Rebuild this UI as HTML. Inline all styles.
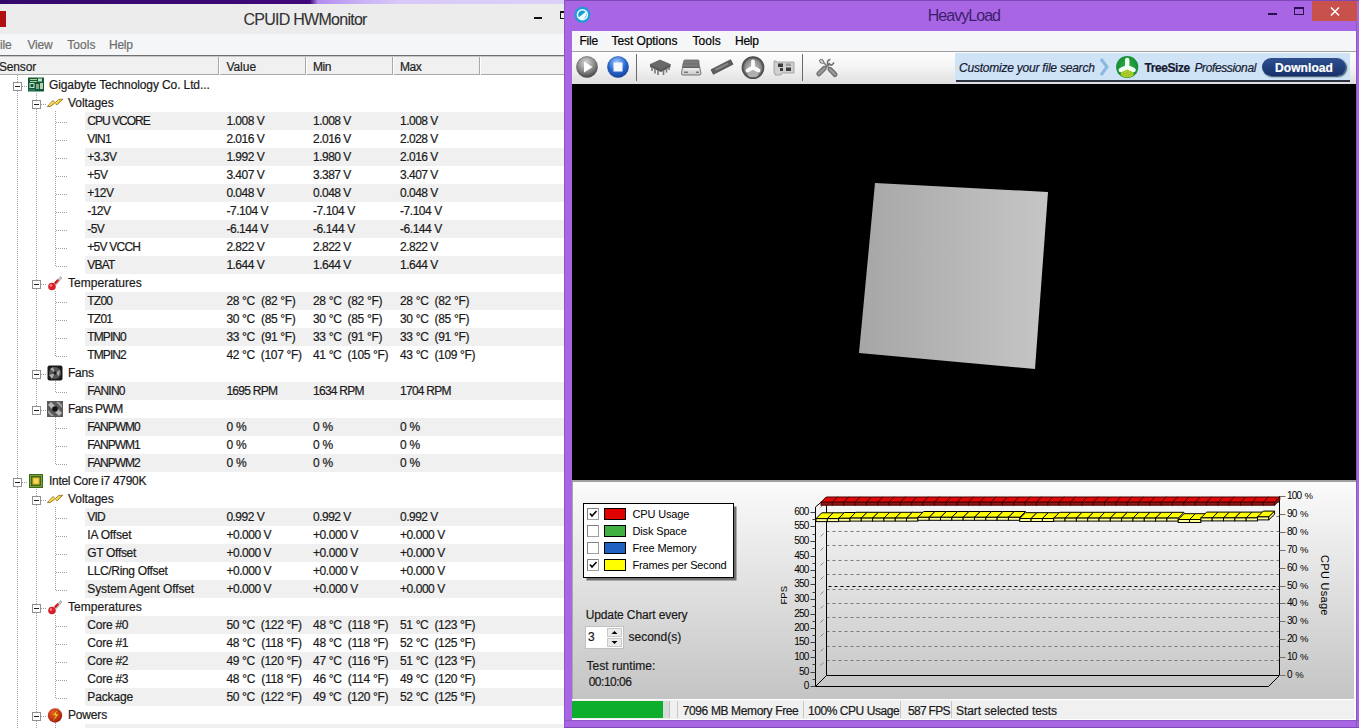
<!DOCTYPE html><html><head><meta charset="utf-8"><style>
*{margin:0;padding:0;box-sizing:border-box}
html,body{width:1359px;height:728px;overflow:hidden;background:#fff;font-family:"Liberation Sans",sans-serif}
.a{position:absolute}
.t{position:absolute;white-space:nowrap;line-height:1;-webkit-text-stroke:0.2px currentColor}
svg{display:block}
</style></head><body>

<div class="a" style="left:0;top:0;width:564px;height:728px;overflow:hidden;background:#fff">
<div class="a" style="left:0;top:0;width:564px;height:4px;background:linear-gradient(90deg,#34086a 0px,#40087a 310px,#b48cf0 318px,#c8b0f4 360px,#d8c8f8 400px,#dcd0f8 564px)"></div>
<div class="a" style="left:0;top:4px;width:564px;height:30px;background:#ececec"></div>
<div class="a" style="left:0;top:11px;width:6px;height:16px;background:#b01010"></div>
<div class="t" style="left:243.4px;top:11.71px;font-size:16px;color:#333333;letter-spacing:-0.729px;font-weight:normal;font-style:normal;-webkit-text-stroke:0.1px #333">CPUID HWMonitor</div>
<div class="a" style="left:534px;top:17px;width:8px;height:2px;background:#111"></div>
<div class="a" style="left:560px;top:11px;width:10px;height:8px;border:1px solid #111;border-top-width:2px"></div>
<div class="a" style="left:0;top:34px;width:564px;height:21px;background:#f5f6f7"></div>
<div class="t" style="left:-7px;top:38.83px;font-size:12px;color:#6d6d6d;letter-spacing:-0.238px;font-weight:normal;font-style:normal;">File</div>
<div class="t" style="left:27.5px;top:38.83px;font-size:12px;color:#6d6d6d;letter-spacing:-0.205px;font-weight:normal;font-style:normal;">View</div>
<div class="t" style="left:67.3px;top:38.83px;font-size:12px;color:#6d6d6d;letter-spacing:0.075px;font-weight:normal;font-style:normal;">Tools</div>
<div class="t" style="left:109px;top:38.83px;font-size:12px;color:#6d6d6d;letter-spacing:-0.282px;font-weight:normal;font-style:normal;">Help</div>
<div class="a" style="left:0;top:55px;width:564px;height:1px;background:#707070"></div>
<div class="a" style="left:0;top:56px;width:564px;height:1px;background:#c8c8c8"></div>
<div class="a" style="left:0;top:57px;width:564px;height:18px;background:#f0f0f0"></div>
<div class="a" style="left:0;top:74px;width:564px;height:1px;background:#a8a8a8"></div>
<div class="a" style="left:218px;top:57px;width:1px;height:18px;background:#a8a8a8"></div>
<div class="a" style="left:219px;top:57px;width:1px;height:18px;background:#fff"></div>
<div class="a" style="left:305px;top:57px;width:1px;height:18px;background:#a8a8a8"></div>
<div class="a" style="left:306px;top:57px;width:1px;height:18px;background:#fff"></div>
<div class="a" style="left:392px;top:57px;width:1px;height:18px;background:#a8a8a8"></div>
<div class="a" style="left:393px;top:57px;width:1px;height:18px;background:#fff"></div>
<div class="a" style="left:479px;top:57px;width:1px;height:18px;background:#a8a8a8"></div>
<div class="a" style="left:480px;top:57px;width:1px;height:18px;background:#fff"></div>
<div class="t" style="left:-1px;top:60.63px;font-size:12px;color:#1e1e1e;letter-spacing:-0.173px;font-weight:normal;font-style:normal;">Sensor</div>
<div class="t" style="left:226.4px;top:60.63px;font-size:12px;color:#1e1e1e;letter-spacing:-0.030px;font-weight:normal;font-style:normal;">Value</div>
<div class="t" style="left:313px;top:60.63px;font-size:12px;color:#1e1e1e;letter-spacing:-0.433px;font-weight:normal;font-style:normal;">Min</div>
<div class="t" style="left:400px;top:60.63px;font-size:12px;color:#1e1e1e;letter-spacing:-0.433px;font-weight:normal;font-style:normal;">Max</div>
<div class="a" style="left:85px;top:112px;width:479px;height:18px;background:#f0f0f0"></div>
<div class="a" style="left:85px;top:148px;width:479px;height:18px;background:#f0f0f0"></div>
<div class="a" style="left:85px;top:184px;width:479px;height:18px;background:#f0f0f0"></div>
<div class="a" style="left:85px;top:220px;width:479px;height:18px;background:#f0f0f0"></div>
<div class="a" style="left:85px;top:256px;width:479px;height:18px;background:#f0f0f0"></div>
<div class="a" style="left:85px;top:292px;width:479px;height:18px;background:#f0f0f0"></div>
<div class="a" style="left:85px;top:328px;width:479px;height:18px;background:#f0f0f0"></div>
<div class="a" style="left:85px;top:382px;width:479px;height:18px;background:#f0f0f0"></div>
<div class="a" style="left:85px;top:418px;width:479px;height:18px;background:#f0f0f0"></div>
<div class="a" style="left:85px;top:454px;width:479px;height:18px;background:#f0f0f0"></div>
<div class="a" style="left:85px;top:508px;width:479px;height:18px;background:#f0f0f0"></div>
<div class="a" style="left:85px;top:544px;width:479px;height:18px;background:#f0f0f0"></div>
<div class="a" style="left:85px;top:580px;width:479px;height:18px;background:#f0f0f0"></div>
<div class="a" style="left:85px;top:616px;width:479px;height:18px;background:#f0f0f0"></div>
<div class="a" style="left:85px;top:652px;width:479px;height:18px;background:#f0f0f0"></div>
<div class="a" style="left:85px;top:688px;width:479px;height:18px;background:#f0f0f0"></div>
<div class="a" style="left:85px;top:724px;width:479px;height:18px;background:#f0f0f0"></div>
<div class="a" style="left:17px;top:75px;width:1px;height:653px;background:repeating-linear-gradient(180deg,#a0a0a0 0 1px,transparent 1px 2px)"></div>
<div class="a" style="left:36px;top:93px;width:1px;height:318px;background:repeating-linear-gradient(180deg,#a0a0a0 0 1px,transparent 1px 2px)"></div>
<div class="a" style="left:36px;top:489px;width:1px;height:239px;background:repeating-linear-gradient(180deg,#a0a0a0 0 1px,transparent 1px 2px)"></div>
<div class="a" style="left:55px;top:111px;width:1px;height:156px;background:repeating-linear-gradient(180deg,#a0a0a0 0 1px,transparent 1px 2px)"></div>
<div class="a" style="left:55px;top:291px;width:1px;height:66px;background:repeating-linear-gradient(180deg,#a0a0a0 0 1px,transparent 1px 2px)"></div>
<div class="a" style="left:55px;top:381px;width:1px;height:12px;background:repeating-linear-gradient(180deg,#a0a0a0 0 1px,transparent 1px 2px)"></div>
<div class="a" style="left:55px;top:417px;width:1px;height:48px;background:repeating-linear-gradient(180deg,#a0a0a0 0 1px,transparent 1px 2px)"></div>
<div class="a" style="left:55px;top:507px;width:1px;height:84px;background:repeating-linear-gradient(180deg,#a0a0a0 0 1px,transparent 1px 2px)"></div>
<div class="a" style="left:55px;top:615px;width:1px;height:84px;background:repeating-linear-gradient(180deg,#a0a0a0 0 1px,transparent 1px 2px)"></div>
<div class="a" style="left:55px;top:723px;width:1px;height:5px;background:repeating-linear-gradient(180deg,#a0a0a0 0 1px,transparent 1px 2px)"></div>
<div class="a" style="left:22px;top:86px;width:6px;height:1px;background:repeating-linear-gradient(90deg,#a0a0a0 0 1px,transparent 1px 2px)"></div>
<div class="a" style="left:13px;top:82px;width:9px;height:9px;border:1px solid #919191;background:#fff"></div>
<div class="a" style="left:15px;top:86px;width:5px;height:1px;background:#202020"></div>
<div class="a" style="left:28px;top:77px;width:16px;height:16px"><svg width="16" height="16" viewBox="0 0 16 16"><rect x="0" y="0.5" width="16" height="14" fill="#0f5a3a"/><rect x="2" y="2" width="7" height="1" fill="#b8d088"/><rect x="2" y="4" width="7" height="1" fill="#b8d088"/><rect x="10" y="1.5" width="4" height="3" fill="#c8e0c0"/><rect x="2" y="6.5" width="4" height="4" fill="none" stroke="#d0e0d0" stroke-width="1"/><rect x="8" y="7" width="3" height="5" fill="#8aa890"/><rect x="12" y="6" width="3" height="6" fill="#b8d0a8"/><rect x="1" y="12.5" width="6" height="1" fill="#5a8a6a"/></svg></div>
<div class="t" style="left:49px;top:78.83px;font-size:12px;color:#1a1a1a;letter-spacing:-0.109px;font-weight:normal;font-style:normal;">Gigabyte Technology Co. Ltd...</div>
<div class="a" style="left:41px;top:104px;width:6px;height:1px;background:repeating-linear-gradient(90deg,#a0a0a0 0 1px,transparent 1px 2px)"></div>
<div class="a" style="left:32px;top:100px;width:9px;height:9px;border:1px solid #919191;background:#fff"></div>
<div class="a" style="left:34px;top:104px;width:5px;height:1px;background:#202020"></div>
<div class="a" style="left:47px;top:95px;width:16px;height:16px"><svg width="16" height="16" viewBox="0 0 16 16"><path d="M0.3 11.6 L5.8 5.6 L8.4 7.6 L11.8 4.4 L15.8 4.2 L10.2 9.8 L7.6 8.2 L3.6 11.4 Z" fill="#f0c830" stroke="#7a5a10" stroke-width="0.7" stroke-linejoin="round"/><path d="M2 10.6 L6 6.8 L8.5 8.8 L12 5.4" fill="none" stroke="#fff0a0" stroke-width="0.8"/></svg></div>
<div class="t" style="left:68px;top:96.83px;font-size:12px;color:#1a1a1a;letter-spacing:-0.048px;font-weight:normal;font-style:normal;">Voltages</div>
<div class="a" style="left:56px;top:122px;width:11px;height:1px;background:repeating-linear-gradient(90deg,#a0a0a0 0 1px,transparent 1px 2px)"></div>
<div class="t" style="left:87.3px;top:114.83px;font-size:12px;color:#1a1a1a;letter-spacing:-0.982px;font-weight:normal;font-style:normal;">CPU VCORE</div>
<div class="t" style="left:226.4px;top:114.83px;font-size:12px;color:#1a1a1a;letter-spacing:-0.515px;font-weight:normal;font-style:normal;">1.008 V</div>
<div class="t" style="left:313px;top:114.83px;font-size:12px;color:#1a1a1a;letter-spacing:-0.515px;font-weight:normal;font-style:normal;">1.008 V</div>
<div class="t" style="left:400px;top:114.83px;font-size:12px;color:#1a1a1a;letter-spacing:-0.515px;font-weight:normal;font-style:normal;">1.008 V</div>
<div class="a" style="left:56px;top:140px;width:11px;height:1px;background:repeating-linear-gradient(90deg,#a0a0a0 0 1px,transparent 1px 2px)"></div>
<div class="t" style="left:87.3px;top:132.83px;font-size:12px;color:#1a1a1a;letter-spacing:-0.800px;font-weight:normal;font-style:normal;">VIN1</div>
<div class="t" style="left:226.4px;top:132.83px;font-size:12px;color:#1a1a1a;letter-spacing:-0.515px;font-weight:normal;font-style:normal;">2.016 V</div>
<div class="t" style="left:313px;top:132.83px;font-size:12px;color:#1a1a1a;letter-spacing:-0.515px;font-weight:normal;font-style:normal;">2.016 V</div>
<div class="t" style="left:400px;top:132.83px;font-size:12px;color:#1a1a1a;letter-spacing:-0.515px;font-weight:normal;font-style:normal;">2.028 V</div>
<div class="a" style="left:56px;top:158px;width:11px;height:1px;background:repeating-linear-gradient(90deg,#a0a0a0 0 1px,transparent 1px 2px)"></div>
<div class="t" style="left:87.3px;top:150.83px;font-size:12px;color:#1a1a1a;letter-spacing:-0.481px;font-weight:normal;font-style:normal;">+3.3V</div>
<div class="t" style="left:226.4px;top:150.83px;font-size:12px;color:#1a1a1a;letter-spacing:-0.515px;font-weight:normal;font-style:normal;">1.992 V</div>
<div class="t" style="left:313px;top:150.83px;font-size:12px;color:#1a1a1a;letter-spacing:-0.515px;font-weight:normal;font-style:normal;">1.980 V</div>
<div class="t" style="left:400px;top:150.83px;font-size:12px;color:#1a1a1a;letter-spacing:-0.515px;font-weight:normal;font-style:normal;">2.016 V</div>
<div class="a" style="left:56px;top:176px;width:11px;height:1px;background:repeating-linear-gradient(90deg,#a0a0a0 0 1px,transparent 1px 2px)"></div>
<div class="t" style="left:87.3px;top:168.83px;font-size:12px;color:#1a1a1a;letter-spacing:-0.547px;font-weight:normal;font-style:normal;">+5V</div>
<div class="t" style="left:226.4px;top:168.83px;font-size:12px;color:#1a1a1a;letter-spacing:-0.515px;font-weight:normal;font-style:normal;">3.407 V</div>
<div class="t" style="left:313px;top:168.83px;font-size:12px;color:#1a1a1a;letter-spacing:-0.515px;font-weight:normal;font-style:normal;">3.387 V</div>
<div class="t" style="left:400px;top:168.83px;font-size:12px;color:#1a1a1a;letter-spacing:-0.515px;font-weight:normal;font-style:normal;">3.407 V</div>
<div class="a" style="left:56px;top:194px;width:11px;height:1px;background:repeating-linear-gradient(90deg,#a0a0a0 0 1px,transparent 1px 2px)"></div>
<div class="t" style="left:87.3px;top:186.83px;font-size:12px;color:#1a1a1a;letter-spacing:-0.560px;font-weight:normal;font-style:normal;">+12V</div>
<div class="t" style="left:226.4px;top:186.83px;font-size:12px;color:#1a1a1a;letter-spacing:-0.515px;font-weight:normal;font-style:normal;">0.048 V</div>
<div class="t" style="left:313px;top:186.83px;font-size:12px;color:#1a1a1a;letter-spacing:-0.515px;font-weight:normal;font-style:normal;">0.048 V</div>
<div class="t" style="left:400px;top:186.83px;font-size:12px;color:#1a1a1a;letter-spacing:-0.515px;font-weight:normal;font-style:normal;">0.048 V</div>
<div class="a" style="left:56px;top:212px;width:11px;height:1px;background:repeating-linear-gradient(90deg,#a0a0a0 0 1px,transparent 1px 2px)"></div>
<div class="t" style="left:87.3px;top:204.83px;font-size:12px;color:#1a1a1a;letter-spacing:-0.560px;font-weight:normal;font-style:normal;">-12V</div>
<div class="t" style="left:226.4px;top:204.83px;font-size:12px;color:#1a1a1a;letter-spacing:-0.451px;font-weight:normal;font-style:normal;">-7.104 V</div>
<div class="t" style="left:313px;top:204.83px;font-size:12px;color:#1a1a1a;letter-spacing:-0.451px;font-weight:normal;font-style:normal;">-7.104 V</div>
<div class="t" style="left:400px;top:204.83px;font-size:12px;color:#1a1a1a;letter-spacing:-0.451px;font-weight:normal;font-style:normal;">-7.104 V</div>
<div class="a" style="left:56px;top:230px;width:11px;height:1px;background:repeating-linear-gradient(90deg,#a0a0a0 0 1px,transparent 1px 2px)"></div>
<div class="t" style="left:87.3px;top:222.83px;font-size:12px;color:#1a1a1a;letter-spacing:-0.547px;font-weight:normal;font-style:normal;">-5V</div>
<div class="t" style="left:226.4px;top:222.83px;font-size:12px;color:#1a1a1a;letter-spacing:-0.451px;font-weight:normal;font-style:normal;">-6.144 V</div>
<div class="t" style="left:313px;top:222.83px;font-size:12px;color:#1a1a1a;letter-spacing:-0.451px;font-weight:normal;font-style:normal;">-6.144 V</div>
<div class="t" style="left:400px;top:222.83px;font-size:12px;color:#1a1a1a;letter-spacing:-0.451px;font-weight:normal;font-style:normal;">-6.144 V</div>
<div class="a" style="left:56px;top:248px;width:11px;height:1px;background:repeating-linear-gradient(90deg,#a0a0a0 0 1px,transparent 1px 2px)"></div>
<div class="t" style="left:87.3px;top:240.83px;font-size:12px;color:#1a1a1a;letter-spacing:-0.758px;font-weight:normal;font-style:normal;">+5V VCCH</div>
<div class="t" style="left:226.4px;top:240.83px;font-size:12px;color:#1a1a1a;letter-spacing:-0.515px;font-weight:normal;font-style:normal;">2.822 V</div>
<div class="t" style="left:313px;top:240.83px;font-size:12px;color:#1a1a1a;letter-spacing:-0.515px;font-weight:normal;font-style:normal;">2.822 V</div>
<div class="t" style="left:400px;top:240.83px;font-size:12px;color:#1a1a1a;letter-spacing:-0.515px;font-weight:normal;font-style:normal;">2.822 V</div>
<div class="a" style="left:56px;top:266px;width:11px;height:1px;background:repeating-linear-gradient(90deg,#a0a0a0 0 1px,transparent 1px 2px)"></div>
<div class="t" style="left:87.3px;top:258.83px;font-size:12px;color:#1a1a1a;letter-spacing:-0.796px;font-weight:normal;font-style:normal;">VBAT</div>
<div class="t" style="left:226.4px;top:258.83px;font-size:12px;color:#1a1a1a;letter-spacing:-0.515px;font-weight:normal;font-style:normal;">1.644 V</div>
<div class="t" style="left:313px;top:258.83px;font-size:12px;color:#1a1a1a;letter-spacing:-0.515px;font-weight:normal;font-style:normal;">1.644 V</div>
<div class="t" style="left:400px;top:258.83px;font-size:12px;color:#1a1a1a;letter-spacing:-0.515px;font-weight:normal;font-style:normal;">1.644 V</div>
<div class="a" style="left:41px;top:284px;width:6px;height:1px;background:repeating-linear-gradient(90deg,#a0a0a0 0 1px,transparent 1px 2px)"></div>
<div class="a" style="left:32px;top:280px;width:9px;height:9px;border:1px solid #919191;background:#fff"></div>
<div class="a" style="left:34px;top:284px;width:5px;height:1px;background:#202020"></div>
<div class="a" style="left:47px;top:275px;width:16px;height:16px"><svg width="16" height="16" viewBox="0 0 16 16"><path d="M8 8 L13.5 1.5 L15 3 L9.5 9.5 Z" fill="#c8c8c8" stroke="#999" stroke-width="0.6"/><path d="M7 7.5 L10.5 4 L12 5.5 L8.5 9.5 Z" fill="#d02020"/><circle cx="5" cy="11.5" r="3.8" fill="#d8202a"/><circle cx="4" cy="10.5" r="1.2" fill="#ff9090"/></svg></div>
<div class="t" style="left:68px;top:276.83px;font-size:12px;color:#1a1a1a;letter-spacing:0.031px;font-weight:normal;font-style:normal;">Temperatures</div>
<div class="a" style="left:56px;top:302px;width:11px;height:1px;background:repeating-linear-gradient(90deg,#a0a0a0 0 1px,transparent 1px 2px)"></div>
<div class="t" style="left:87.3px;top:294.83px;font-size:12px;color:#1a1a1a;letter-spacing:-0.777px;font-weight:normal;font-style:normal;">TZ00</div>
<div class="t" style="left:226.4px;top:294.83px;font-size:12px;color:#1a1a1a;letter-spacing:-0.320px;font-weight:normal;font-style:normal;">28 °C&nbsp; (82 °F)</div>
<div class="t" style="left:313px;top:294.83px;font-size:12px;color:#1a1a1a;letter-spacing:-0.320px;font-weight:normal;font-style:normal;">28 °C&nbsp; (82 °F)</div>
<div class="t" style="left:400px;top:294.83px;font-size:12px;color:#1a1a1a;letter-spacing:-0.320px;font-weight:normal;font-style:normal;">28 °C&nbsp; (82 °F)</div>
<div class="a" style="left:56px;top:320px;width:11px;height:1px;background:repeating-linear-gradient(90deg,#a0a0a0 0 1px,transparent 1px 2px)"></div>
<div class="t" style="left:87.3px;top:312.83px;font-size:12px;color:#1a1a1a;letter-spacing:-0.777px;font-weight:normal;font-style:normal;">TZ01</div>
<div class="t" style="left:226.4px;top:312.83px;font-size:12px;color:#1a1a1a;letter-spacing:-0.320px;font-weight:normal;font-style:normal;">30 °C&nbsp; (85 °F)</div>
<div class="t" style="left:313px;top:312.83px;font-size:12px;color:#1a1a1a;letter-spacing:-0.320px;font-weight:normal;font-style:normal;">30 °C&nbsp; (85 °F)</div>
<div class="t" style="left:400px;top:312.83px;font-size:12px;color:#1a1a1a;letter-spacing:-0.320px;font-weight:normal;font-style:normal;">30 °C&nbsp; (85 °F)</div>
<div class="a" style="left:56px;top:338px;width:11px;height:1px;background:repeating-linear-gradient(90deg,#a0a0a0 0 1px,transparent 1px 2px)"></div>
<div class="t" style="left:87.3px;top:330.83px;font-size:12px;color:#1a1a1a;letter-spacing:-0.909px;font-weight:normal;font-style:normal;">TMPIN0</div>
<div class="t" style="left:226.4px;top:330.83px;font-size:12px;color:#1a1a1a;letter-spacing:-0.320px;font-weight:normal;font-style:normal;">33 °C&nbsp; (91 °F)</div>
<div class="t" style="left:313px;top:330.83px;font-size:12px;color:#1a1a1a;letter-spacing:-0.320px;font-weight:normal;font-style:normal;">33 °C&nbsp; (91 °F)</div>
<div class="t" style="left:400px;top:330.83px;font-size:12px;color:#1a1a1a;letter-spacing:-0.320px;font-weight:normal;font-style:normal;">33 °C&nbsp; (91 °F)</div>
<div class="a" style="left:56px;top:356px;width:11px;height:1px;background:repeating-linear-gradient(90deg,#a0a0a0 0 1px,transparent 1px 2px)"></div>
<div class="t" style="left:87.3px;top:348.83px;font-size:12px;color:#1a1a1a;letter-spacing:-0.909px;font-weight:normal;font-style:normal;">TMPIN2</div>
<div class="t" style="left:226.4px;top:348.83px;font-size:12px;color:#1a1a1a;letter-spacing:-0.339px;font-weight:normal;font-style:normal;">42 °C&nbsp; (107 °F)</div>
<div class="t" style="left:313px;top:348.83px;font-size:12px;color:#1a1a1a;letter-spacing:-0.339px;font-weight:normal;font-style:normal;">41 °C&nbsp; (105 °F)</div>
<div class="t" style="left:400px;top:348.83px;font-size:12px;color:#1a1a1a;letter-spacing:-0.339px;font-weight:normal;font-style:normal;">43 °C&nbsp; (109 °F)</div>
<div class="a" style="left:41px;top:374px;width:6px;height:1px;background:repeating-linear-gradient(90deg,#a0a0a0 0 1px,transparent 1px 2px)"></div>
<div class="a" style="left:32px;top:370px;width:9px;height:9px;border:1px solid #919191;background:#fff"></div>
<div class="a" style="left:34px;top:374px;width:5px;height:1px;background:#202020"></div>
<div class="a" style="left:47px;top:365px;width:16px;height:16px"><svg width="16" height="16" viewBox="0 0 16 16"><rect x="0.5" y="0.5" width="15" height="15" rx="2" fill="#1a1a1a"/><circle cx="8" cy="8" r="6" fill="#555"/><path d="M8 8 L3 4 L6 2 Z M8 8 L13 5 L12 11 Z M8 8 L5 14 L2 10 Z" fill="#aaa"/><circle cx="8" cy="8" r="1.8" fill="#222"/></svg></div>
<div class="t" style="left:68px;top:366.83px;font-size:12px;color:#1a1a1a;letter-spacing:-0.238px;font-weight:normal;font-style:normal;">Fans</div>
<div class="a" style="left:56px;top:392px;width:11px;height:1px;background:repeating-linear-gradient(90deg,#a0a0a0 0 1px,transparent 1px 2px)"></div>
<div class="t" style="left:87.3px;top:384.83px;font-size:12px;color:#1a1a1a;letter-spacing:-0.771px;font-weight:normal;font-style:normal;">FANIN0</div>
<div class="t" style="left:226.4px;top:384.83px;font-size:12px;color:#1a1a1a;letter-spacing:-0.734px;font-weight:normal;font-style:normal;">1695 RPM</div>
<div class="t" style="left:313px;top:384.83px;font-size:12px;color:#1a1a1a;letter-spacing:-0.734px;font-weight:normal;font-style:normal;">1634 RPM</div>
<div class="t" style="left:400px;top:384.83px;font-size:12px;color:#1a1a1a;letter-spacing:-0.734px;font-weight:normal;font-style:normal;">1704 RPM</div>
<div class="a" style="left:41px;top:410px;width:6px;height:1px;background:repeating-linear-gradient(90deg,#a0a0a0 0 1px,transparent 1px 2px)"></div>
<div class="a" style="left:32px;top:406px;width:9px;height:9px;border:1px solid #919191;background:#fff"></div>
<div class="a" style="left:34px;top:410px;width:5px;height:1px;background:#202020"></div>
<div class="a" style="left:47px;top:401px;width:16px;height:16px"><svg width="16" height="16" viewBox="0 0 16 16"><rect x="0" y="0" width="16" height="16" fill="#5a5a5a"/><path d="M1 4 L4 1 L15 12 L12 15 Z" fill="#d0d0d0" opacity="0.8"/><path d="M9 1 L12 1 L15 4 L15 7 Z M1 9 L1 12 L4 15 L7 15 Z" fill="#b0b0b0" opacity="0.8"/><circle cx="8" cy="8" r="2.8" fill="#111"/></svg></div>
<div class="t" style="left:68px;top:402.83px;font-size:12px;color:#1a1a1a;letter-spacing:-0.596px;font-weight:normal;font-style:normal;">Fans PWM</div>
<div class="a" style="left:56px;top:428px;width:11px;height:1px;background:repeating-linear-gradient(90deg,#a0a0a0 0 1px,transparent 1px 2px)"></div>
<div class="t" style="left:87.3px;top:420.83px;font-size:12px;color:#1a1a1a;letter-spacing:-0.982px;font-weight:normal;font-style:normal;">FANPWM0</div>
<div class="t" style="left:226.4px;top:420.83px;font-size:12px;color:#1a1a1a;letter-spacing:-0.200px;font-weight:normal;font-style:normal;">0 %</div>
<div class="t" style="left:313px;top:420.83px;font-size:12px;color:#1a1a1a;letter-spacing:-0.200px;font-weight:normal;font-style:normal;">0 %</div>
<div class="t" style="left:400px;top:420.83px;font-size:12px;color:#1a1a1a;letter-spacing:-0.200px;font-weight:normal;font-style:normal;">0 %</div>
<div class="a" style="left:56px;top:446px;width:11px;height:1px;background:repeating-linear-gradient(90deg,#a0a0a0 0 1px,transparent 1px 2px)"></div>
<div class="t" style="left:87.3px;top:438.83px;font-size:12px;color:#1a1a1a;letter-spacing:-0.982px;font-weight:normal;font-style:normal;">FANPWM1</div>
<div class="t" style="left:226.4px;top:438.83px;font-size:12px;color:#1a1a1a;letter-spacing:-0.200px;font-weight:normal;font-style:normal;">0 %</div>
<div class="t" style="left:313px;top:438.83px;font-size:12px;color:#1a1a1a;letter-spacing:-0.200px;font-weight:normal;font-style:normal;">0 %</div>
<div class="t" style="left:400px;top:438.83px;font-size:12px;color:#1a1a1a;letter-spacing:-0.200px;font-weight:normal;font-style:normal;">0 %</div>
<div class="a" style="left:56px;top:464px;width:11px;height:1px;background:repeating-linear-gradient(90deg,#a0a0a0 0 1px,transparent 1px 2px)"></div>
<div class="t" style="left:87.3px;top:456.83px;font-size:12px;color:#1a1a1a;letter-spacing:-0.982px;font-weight:normal;font-style:normal;">FANPWM2</div>
<div class="t" style="left:226.4px;top:456.83px;font-size:12px;color:#1a1a1a;letter-spacing:-0.200px;font-weight:normal;font-style:normal;">0 %</div>
<div class="t" style="left:313px;top:456.83px;font-size:12px;color:#1a1a1a;letter-spacing:-0.200px;font-weight:normal;font-style:normal;">0 %</div>
<div class="t" style="left:400px;top:456.83px;font-size:12px;color:#1a1a1a;letter-spacing:-0.200px;font-weight:normal;font-style:normal;">0 %</div>
<div class="a" style="left:22px;top:482px;width:6px;height:1px;background:repeating-linear-gradient(90deg,#a0a0a0 0 1px,transparent 1px 2px)"></div>
<div class="a" style="left:13px;top:478px;width:9px;height:9px;border:1px solid #919191;background:#fff"></div>
<div class="a" style="left:15px;top:482px;width:5px;height:1px;background:#202020"></div>
<div class="a" style="left:28px;top:473px;width:16px;height:16px"><svg width="16" height="16" viewBox="0 0 16 16"><rect x="1" y="1" width="14" height="14" fill="#3a6a18"/><rect x="2.5" y="2.5" width="11" height="11" fill="none" stroke="#c8d870" stroke-width="1" stroke-dasharray="1,1"/><rect x="4.5" y="4.5" width="7" height="7" fill="#e8c030"/><rect x="6" y="6" width="4" height="4" fill="#f8d860"/></svg></div>
<div class="t" style="left:49px;top:474.83px;font-size:12px;color:#1a1a1a;letter-spacing:-0.295px;font-weight:normal;font-style:normal;">Intel Core i7 4790K</div>
<div class="a" style="left:41px;top:500px;width:6px;height:1px;background:repeating-linear-gradient(90deg,#a0a0a0 0 1px,transparent 1px 2px)"></div>
<div class="a" style="left:32px;top:496px;width:9px;height:9px;border:1px solid #919191;background:#fff"></div>
<div class="a" style="left:34px;top:500px;width:5px;height:1px;background:#202020"></div>
<div class="a" style="left:47px;top:491px;width:16px;height:16px"><svg width="16" height="16" viewBox="0 0 16 16"><path d="M0.3 11.6 L5.8 5.6 L8.4 7.6 L11.8 4.4 L15.8 4.2 L10.2 9.8 L7.6 8.2 L3.6 11.4 Z" fill="#f0c830" stroke="#7a5a10" stroke-width="0.7" stroke-linejoin="round"/><path d="M2 10.6 L6 6.8 L8.5 8.8 L12 5.4" fill="none" stroke="#fff0a0" stroke-width="0.8"/></svg></div>
<div class="t" style="left:68px;top:492.83px;font-size:12px;color:#1a1a1a;letter-spacing:-0.048px;font-weight:normal;font-style:normal;">Voltages</div>
<div class="a" style="left:56px;top:518px;width:11px;height:1px;background:repeating-linear-gradient(90deg,#a0a0a0 0 1px,transparent 1px 2px)"></div>
<div class="t" style="left:87.3px;top:510.83px;font-size:12px;color:#1a1a1a;letter-spacing:-0.867px;font-weight:normal;font-style:normal;">VID</div>
<div class="t" style="left:226.4px;top:510.83px;font-size:12px;color:#1a1a1a;letter-spacing:-0.515px;font-weight:normal;font-style:normal;">0.992 V</div>
<div class="t" style="left:313px;top:510.83px;font-size:12px;color:#1a1a1a;letter-spacing:-0.515px;font-weight:normal;font-style:normal;">0.992 V</div>
<div class="t" style="left:400px;top:510.83px;font-size:12px;color:#1a1a1a;letter-spacing:-0.515px;font-weight:normal;font-style:normal;">0.992 V</div>
<div class="a" style="left:56px;top:536px;width:11px;height:1px;background:repeating-linear-gradient(90deg,#a0a0a0 0 1px,transparent 1px 2px)"></div>
<div class="t" style="left:87.3px;top:528.83px;font-size:12px;color:#1a1a1a;letter-spacing:-0.201px;font-weight:normal;font-style:normal;">IA Offset</div>
<div class="t" style="left:226.4px;top:528.83px;font-size:12px;color:#1a1a1a;letter-spacing:-0.451px;font-weight:normal;font-style:normal;">+0.000 V</div>
<div class="t" style="left:313px;top:528.83px;font-size:12px;color:#1a1a1a;letter-spacing:-0.451px;font-weight:normal;font-style:normal;">+0.000 V</div>
<div class="t" style="left:400px;top:528.83px;font-size:12px;color:#1a1a1a;letter-spacing:-0.451px;font-weight:normal;font-style:normal;">+0.000 V</div>
<div class="a" style="left:56px;top:554px;width:11px;height:1px;background:repeating-linear-gradient(90deg,#a0a0a0 0 1px,transparent 1px 2px)"></div>
<div class="t" style="left:87.3px;top:546.83px;font-size:12px;color:#1a1a1a;letter-spacing:-0.327px;font-weight:normal;font-style:normal;">GT Offset</div>
<div class="t" style="left:226.4px;top:546.83px;font-size:12px;color:#1a1a1a;letter-spacing:-0.451px;font-weight:normal;font-style:normal;">+0.000 V</div>
<div class="t" style="left:313px;top:546.83px;font-size:12px;color:#1a1a1a;letter-spacing:-0.451px;font-weight:normal;font-style:normal;">+0.000 V</div>
<div class="t" style="left:400px;top:546.83px;font-size:12px;color:#1a1a1a;letter-spacing:-0.451px;font-weight:normal;font-style:normal;">+0.000 V</div>
<div class="a" style="left:56px;top:572px;width:11px;height:1px;background:repeating-linear-gradient(90deg,#a0a0a0 0 1px,transparent 1px 2px)"></div>
<div class="t" style="left:87.3px;top:564.83px;font-size:12px;color:#1a1a1a;letter-spacing:-0.332px;font-weight:normal;font-style:normal;">LLC/Ring Offset</div>
<div class="t" style="left:226.4px;top:564.83px;font-size:12px;color:#1a1a1a;letter-spacing:-0.451px;font-weight:normal;font-style:normal;">+0.000 V</div>
<div class="t" style="left:313px;top:564.83px;font-size:12px;color:#1a1a1a;letter-spacing:-0.451px;font-weight:normal;font-style:normal;">+0.000 V</div>
<div class="t" style="left:400px;top:564.83px;font-size:12px;color:#1a1a1a;letter-spacing:-0.451px;font-weight:normal;font-style:normal;">+0.000 V</div>
<div class="a" style="left:56px;top:590px;width:11px;height:1px;background:repeating-linear-gradient(90deg,#a0a0a0 0 1px,transparent 1px 2px)"></div>
<div class="t" style="left:87.3px;top:582.83px;font-size:12px;color:#1a1a1a;letter-spacing:-0.127px;font-weight:normal;font-style:normal;">System Agent Offset</div>
<div class="t" style="left:226.4px;top:582.83px;font-size:12px;color:#1a1a1a;letter-spacing:-0.451px;font-weight:normal;font-style:normal;">+0.000 V</div>
<div class="t" style="left:313px;top:582.83px;font-size:12px;color:#1a1a1a;letter-spacing:-0.451px;font-weight:normal;font-style:normal;">+0.000 V</div>
<div class="t" style="left:400px;top:582.83px;font-size:12px;color:#1a1a1a;letter-spacing:-0.451px;font-weight:normal;font-style:normal;">+0.000 V</div>
<div class="a" style="left:41px;top:608px;width:6px;height:1px;background:repeating-linear-gradient(90deg,#a0a0a0 0 1px,transparent 1px 2px)"></div>
<div class="a" style="left:32px;top:604px;width:9px;height:9px;border:1px solid #919191;background:#fff"></div>
<div class="a" style="left:34px;top:608px;width:5px;height:1px;background:#202020"></div>
<div class="a" style="left:47px;top:599px;width:16px;height:16px"><svg width="16" height="16" viewBox="0 0 16 16"><path d="M8 8 L13.5 1.5 L15 3 L9.5 9.5 Z" fill="#c8c8c8" stroke="#999" stroke-width="0.6"/><path d="M7 7.5 L10.5 4 L12 5.5 L8.5 9.5 Z" fill="#d02020"/><circle cx="5" cy="11.5" r="3.8" fill="#d8202a"/><circle cx="4" cy="10.5" r="1.2" fill="#ff9090"/></svg></div>
<div class="t" style="left:68px;top:600.83px;font-size:12px;color:#1a1a1a;letter-spacing:0.031px;font-weight:normal;font-style:normal;">Temperatures</div>
<div class="a" style="left:56px;top:626px;width:11px;height:1px;background:repeating-linear-gradient(90deg,#a0a0a0 0 1px,transparent 1px 2px)"></div>
<div class="t" style="left:87.3px;top:618.83px;font-size:12px;color:#1a1a1a;letter-spacing:-0.247px;font-weight:normal;font-style:normal;">Core #0</div>
<div class="t" style="left:226.4px;top:618.83px;font-size:12px;color:#1a1a1a;letter-spacing:-0.339px;font-weight:normal;font-style:normal;">50 °C&nbsp; (122 °F)</div>
<div class="t" style="left:313px;top:618.83px;font-size:12px;color:#1a1a1a;letter-spacing:-0.279px;font-weight:normal;font-style:normal;">48 °C&nbsp; (118 °F)</div>
<div class="t" style="left:400px;top:618.83px;font-size:12px;color:#1a1a1a;letter-spacing:-0.339px;font-weight:normal;font-style:normal;">51 °C&nbsp; (123 °F)</div>
<div class="a" style="left:56px;top:644px;width:11px;height:1px;background:repeating-linear-gradient(90deg,#a0a0a0 0 1px,transparent 1px 2px)"></div>
<div class="t" style="left:87.3px;top:636.83px;font-size:12px;color:#1a1a1a;letter-spacing:-0.247px;font-weight:normal;font-style:normal;">Core #1</div>
<div class="t" style="left:226.4px;top:636.83px;font-size:12px;color:#1a1a1a;letter-spacing:-0.279px;font-weight:normal;font-style:normal;">48 °C&nbsp; (118 °F)</div>
<div class="t" style="left:313px;top:636.83px;font-size:12px;color:#1a1a1a;letter-spacing:-0.279px;font-weight:normal;font-style:normal;">48 °C&nbsp; (118 °F)</div>
<div class="t" style="left:400px;top:636.83px;font-size:12px;color:#1a1a1a;letter-spacing:-0.339px;font-weight:normal;font-style:normal;">52 °C&nbsp; (125 °F)</div>
<div class="a" style="left:56px;top:662px;width:11px;height:1px;background:repeating-linear-gradient(90deg,#a0a0a0 0 1px,transparent 1px 2px)"></div>
<div class="t" style="left:87.3px;top:654.83px;font-size:12px;color:#1a1a1a;letter-spacing:-0.247px;font-weight:normal;font-style:normal;">Core #2</div>
<div class="t" style="left:226.4px;top:654.83px;font-size:12px;color:#1a1a1a;letter-spacing:-0.339px;font-weight:normal;font-style:normal;">49 °C&nbsp; (120 °F)</div>
<div class="t" style="left:313px;top:654.83px;font-size:12px;color:#1a1a1a;letter-spacing:-0.279px;font-weight:normal;font-style:normal;">47 °C&nbsp; (116 °F)</div>
<div class="t" style="left:400px;top:654.83px;font-size:12px;color:#1a1a1a;letter-spacing:-0.339px;font-weight:normal;font-style:normal;">51 °C&nbsp; (123 °F)</div>
<div class="a" style="left:56px;top:680px;width:11px;height:1px;background:repeating-linear-gradient(90deg,#a0a0a0 0 1px,transparent 1px 2px)"></div>
<div class="t" style="left:87.3px;top:672.83px;font-size:12px;color:#1a1a1a;letter-spacing:-0.247px;font-weight:normal;font-style:normal;">Core #3</div>
<div class="t" style="left:226.4px;top:672.83px;font-size:12px;color:#1a1a1a;letter-spacing:-0.279px;font-weight:normal;font-style:normal;">48 °C&nbsp; (118 °F)</div>
<div class="t" style="left:313px;top:672.83px;font-size:12px;color:#1a1a1a;letter-spacing:-0.279px;font-weight:normal;font-style:normal;">46 °C&nbsp; (114 °F)</div>
<div class="t" style="left:400px;top:672.83px;font-size:12px;color:#1a1a1a;letter-spacing:-0.339px;font-weight:normal;font-style:normal;">49 °C&nbsp; (120 °F)</div>
<div class="a" style="left:56px;top:698px;width:11px;height:1px;background:repeating-linear-gradient(90deg,#a0a0a0 0 1px,transparent 1px 2px)"></div>
<div class="t" style="left:87.3px;top:690.83px;font-size:12px;color:#1a1a1a;letter-spacing:-0.149px;font-weight:normal;font-style:normal;">Package</div>
<div class="t" style="left:226.4px;top:690.83px;font-size:12px;color:#1a1a1a;letter-spacing:-0.339px;font-weight:normal;font-style:normal;">50 °C&nbsp; (122 °F)</div>
<div class="t" style="left:313px;top:690.83px;font-size:12px;color:#1a1a1a;letter-spacing:-0.339px;font-weight:normal;font-style:normal;">49 °C&nbsp; (120 °F)</div>
<div class="t" style="left:400px;top:690.83px;font-size:12px;color:#1a1a1a;letter-spacing:-0.339px;font-weight:normal;font-style:normal;">52 °C&nbsp; (125 °F)</div>
<div class="a" style="left:41px;top:716px;width:6px;height:1px;background:repeating-linear-gradient(90deg,#a0a0a0 0 1px,transparent 1px 2px)"></div>
<div class="a" style="left:32px;top:712px;width:9px;height:9px;border:1px solid #919191;background:#fff"></div>
<div class="a" style="left:34px;top:716px;width:5px;height:1px;background:#202020"></div>
<div class="a" style="left:47px;top:707px;width:16px;height:16px"><svg width="16" height="16" viewBox="0 0 16 16"><defs><radialGradient id="pwg" cx="0.4" cy="0.35" r="0.7"><stop offset="0" stop-color="#f06030"/><stop offset="1" stop-color="#a01808"/></radialGradient></defs><circle cx="8" cy="8.5" r="7.2" fill="url(#pwg)"/><path d="M11 1.5 L5.5 8.5 L8.5 8.5 L5.5 15 L12 7 L9 7 Z" fill="#ffd020" stroke="#a04000" stroke-width="0.5"/></svg></div>
<div class="t" style="left:68px;top:708.83px;font-size:12px;color:#1a1a1a;letter-spacing:-0.173px;font-weight:normal;font-style:normal;">Powers</div>
</div>
<div class="a" style="left:564px;top:0;width:795px;height:728px;background:#a866e4"></div>
<div class="a" style="left:564px;top:0;width:795px;height:1px;background:#7f48b8"></div>
<div class="a" style="left:564px;top:0;width:1px;height:728px;background:#8a58c0"></div>
<svg class="a" style="left:574px;top:6px" width="17" height="17" viewBox="0 0 17 17"><circle cx="8.4" cy="8.8" r="8" fill="#1d9bd6"/><circle cx="8.4" cy="8.8" r="5" fill="none" stroke="#eaffff" stroke-width="1.5"/><path d="M4.5 11.5 Q8 9 12 5.5 L12.5 9 Q11 12.5 8.4 13.4 Q6 13 4.5 11.5 Z" fill="#f0ffff"/></svg>
<div class="t" style="left:927.7px;top:7.71px;font-size:16px;color:#3e1e6c;letter-spacing:-0.956px;font-weight:normal;font-style:normal;-webkit-text-stroke:0">HeavyLoad</div>
<div class="a" style="left:1268px;top:13px;width:9px;height:2px;background:#2a0f4f"></div>
<div class="a" style="left:1294px;top:7px;width:10px;height:8px;border:1px solid #2a0f4f;border-top-width:2px"></div>
<div class="a" style="left:1312px;top:1px;width:45px;height:20px;background:#c9514c"></div>
<svg class="a" style="left:1330px;top:7px" width="10" height="9" viewBox="0 0 10 9"><path d="M1 0.5 L9 8.5 M9 0.5 L1 8.5" stroke="#fff" stroke-width="1.5"/></svg>
<div class="a" style="left:572px;top:31px;width:784px;height:689px;background:#f0f0f0"></div>
<div class="a" style="left:572px;top:31px;width:784px;height:21px;background:#f5f6f7"></div>
<div class="t" style="left:579.5px;top:34.73px;font-size:12px;color:#000;letter-spacing:-0.238px;font-weight:normal;font-style:normal;">File</div>
<div class="t" style="left:611.5px;top:34.73px;font-size:12px;color:#000;letter-spacing:-0.070px;font-weight:normal;font-style:normal;">Test Options</div>
<div class="t" style="left:692.4px;top:34.73px;font-size:12px;color:#000;letter-spacing:0.075px;font-weight:normal;font-style:normal;">Tools</div>
<div class="t" style="left:735px;top:34.73px;font-size:12px;color:#000;letter-spacing:-0.282px;font-weight:normal;font-style:normal;">Help</div>
<div class="a" style="left:572px;top:51px;width:784px;height:1px;background:#a0a0a0"></div>
<div class="a" style="left:572px;top:52px;width:784px;height:32px;background:linear-gradient(180deg,#fdfdfd,#f3f3f3 50%,#dedede)"></div>
<div class="a" style="left:636px;top:54px;width:1px;height:27px;background:#6a6a6a"></div>
<div class="a" style="left:802px;top:54px;width:1px;height:27px;background:#6a6a6a"></div>
<svg class="a" style="left:572px;top:52px" width="280" height="32" viewBox="572 52 280 32"><defs><radialGradient id="gpl" cx="0.45" cy="0.3" r="0.75"><stop offset="0" stop-color="#d8d8d8"/><stop offset="0.55" stop-color="#8a8a8a"/><stop offset="1" stop-color="#3a3a3a"/></radialGradient><radialGradient id="gst" cx="0.45" cy="0.3" r="0.75"><stop offset="0" stop-color="#a8d0ff"/><stop offset="0.55" stop-color="#2a6ad0"/><stop offset="1" stop-color="#123a90"/></radialGradient><radialGradient id="gts" cx="0.5" cy="0.5" r="0.5"><stop offset="0" stop-color="#c8c8c8"/><stop offset="0.75" stop-color="#8a8a8a"/><stop offset="1" stop-color="#404040"/></radialGradient><linearGradient id="gdk" x1="0" y1="0" x2="0" y2="1"><stop offset="0" stop-color="#9a9a9a"/><stop offset="0.35" stop-color="#5a5a5a"/><stop offset="0.4" stop-color="#eaeaea"/><stop offset="1" stop-color="#c8c8c8"/></linearGradient></defs><circle cx="587" cy="67" r="10.5" fill="url(#gpl)" stroke="#555" stroke-width="0.6"/><path d="M584 61.5 L592.5 67 L584 72.5 Z" fill="#fff"/><circle cx="618" cy="67" r="10.5" fill="url(#gst)" stroke="#1a4aa0" stroke-width="0.6"/><rect x="613.5" y="62.5" width="9" height="9" fill="#f4f8ff"/><path d="M650 64.5 L660 60 L670.5 64.5 L661 69.5 Z" fill="#6a6a6a" stroke="#4a4a4a" stroke-width="0.6"/><path d="M650 64.5 L661 69.5 L670.5 64.5 L670.5 67 L661 72 L650 67 Z" fill="#555"/><path d="M652 67 v4 M655 68.5 v5 M658 70 v5 M663.5 70 v5 M666.5 68.5 v4 M669 67 v3" stroke="#777" stroke-width="1.6"/><path d="M681.5 73.5 L683 64 L699 64 L701 73.5 Q701 75 699 75 L683 75 Q681 75 681.5 73.5 Z" fill="url(#gdk)" stroke="#6a6a6a" stroke-width="0.9"/><path d="M683 64 L684 60.5 Q684 60 685 60 L698 60 Q699 60 699 61 L699 64 Z" fill="#7a7a7a" stroke="#666" stroke-width="0.8"/><rect x="684" y="71.5" width="4" height="1.5" fill="#777"/><rect x="696" y="71.5" width="3" height="1.5" fill="#777"/><g transform="translate(722,67) rotate(-27)"><rect x="-11" y="-2.6" width="22" height="5.2" fill="#5e5e5e" stroke="#3a3a3a" stroke-width="0.6"/><rect x="-7" y="-1.2" width="14" height="1.8" fill="#8a8a8a"/></g><circle cx="753" cy="67.6" r="10.8" fill="url(#gts)"/><circle cx="753" cy="67.6" r="10.8" fill="none" stroke="#505050" stroke-width="1.2"/><clipPath id="tbc"><circle cx="753" cy="67.6" r="9.6"/></clipPath><ellipse cx="753" cy="75" rx="5.5" ry="4.5" fill="#b0b0b0" clip-path="url(#tbc)"/><path d="M753 61.5 L753 67.5 M753 67.5 L747.5 70.5 M753 67.5 L758.5 70.5" stroke="#fafafa" stroke-width="3.8" stroke-linecap="round" fill="none"/><path d="M774 61 L776 61 L776 62 L794 62 L794 73 L782 73 L781 75 L775 75 L775 73 L774 73 Z" fill="#cfcfcf" stroke="#9a9a9a" stroke-width="0.8"/><rect x="778" y="63.5" width="5" height="3.5" fill="#3a3a3a"/><rect x="786" y="63.5" width="5" height="2.5" fill="#9a9a9a"/><rect x="780" y="68" width="3" height="3" fill="#3a3a3a"/><rect x="786" y="67.5" width="5" height="3.5" fill="#3a3a3a"/><path d="M825 68 L830 63" stroke="#7a7a7a" stroke-width="1.6"/><path d="M829 68 L823 62" stroke="#7a7a7a" stroke-width="1.6"/><path d="M818.8 73.8 L824.3 68.3" stroke="#6e6e6e" stroke-width="5" stroke-linecap="round"/><path d="M818.8 73.8 L824.3 68.3" stroke="#9a9a9a" stroke-width="2.4" stroke-linecap="round"/><path d="M835 74.5 L830 69.3" stroke="#6e6e6e" stroke-width="5" stroke-linecap="round"/><path d="M835 74.5 L830 69.3" stroke="#9a9a9a" stroke-width="2.4" stroke-linecap="round"/><path d="M819.5 60 Q821 58.5 823 60 L824 62.5 L822.5 63.5 L820 62.5 Z" fill="#cfcfcf" stroke="#6a6a6a" stroke-width="0.9"/><path d="M830.5 59.5 Q827 60 827.5 63.5 Q829 66 832.5 64.5 L834 62.5" fill="none" stroke="#6a6a6a" stroke-width="1.5"/></svg>
<div class="a" style="left:955px;top:53px;width:395px;height:28px;background:#cfe3f7"></div>
<div class="a" style="left:956px;top:80px;width:394px;height:2px;background:#2a3040"></div>
<div class="t" style="left:959px;top:62.03px;font-size:12px;color:#151a30;letter-spacing:-0.222px;font-weight:normal;font-style:italic;">Customize your file search</div>
<svg class="a" style="left:1100px;top:57px" width="10" height="20" viewBox="0 0 10 20"><path d="M1 2 L7 10 L1 18" fill="none" stroke="#8ab8e0" stroke-width="3"/></svg>
<svg class="a" style="left:1115px;top:55px" width="24" height="24" viewBox="0 0 24 24"><defs><radialGradient id="tsg" cx="0.5" cy="0.45" r="0.55"><stop offset="0" stop-color="#30b050"/><stop offset="1" stop-color="#108a30"/></radialGradient><clipPath id="tsc"><circle cx="12.2" cy="12" r="10.6"/></clipPath></defs><circle cx="12.2" cy="12" r="11.1" fill="url(#tsg)"/><g clip-path="url(#tsc)"><ellipse cx="12.2" cy="19.5" rx="6.5" ry="5.5" fill="#a8c828"/></g><path d="M12.2 5 L12.2 12 M12.2 12 L5.8 15 M12.2 12 L18.6 15" stroke="#f4fff4" stroke-width="4.4" stroke-linecap="round" stroke-linejoin="round" fill="none"/></svg>
<div class="t" style="left:1144.4px;top:62.03px;font-size:12px;color:#151a30;letter-spacing:-0.411px;font-weight:bold;font-style:normal;">TreeSize</div>
<div class="t" style="left:1194.4px;top:62.03px;font-size:12px;color:#151a30;letter-spacing:-0.369px;font-weight:normal;font-style:italic;">Professional</div>
<div class="a" style="left:1262px;top:58px;width:84px;height:18px;border-radius:9px;background:linear-gradient(180deg,#2f4f8f,#16326c);box-shadow:1px 1px 1.5px #345"></div>
<div class="t" style="left:1275px;top:62.03px;font-size:12px;color:#fff;letter-spacing:0.086px;font-weight:bold;font-style:normal;">Download</div>
<div class="a" style="left:572px;top:84px;width:784px;height:396px;background:#000"></div>
<div class="a" style="left:572px;top:480px;width:784px;height:2px;background:#a0a0a0"></div>
<svg class="a" style="left:572px;top:84px" width="784" height="397" viewBox="572 84 784 397"><defs><linearGradient id="cg" x1="0" y1="0" x2="1" y2="0"><stop offset="0" stop-color="#a6a6a6"/><stop offset="1" stop-color="#c6c6c6"/></linearGradient></defs><polygon points="875,183 1048,192 1035,369 859,353" fill="url(#cg)"/></svg>
<svg class="a" style="left:572px;top:482px" width="784" height="217" viewBox="572 482 784 217" font-family="Liberation Sans, sans-serif">
<defs><linearGradient id="pg" x1="0" y1="0" x2="0" y2="1"><stop offset="0" stop-color="#fbfbfb"/><stop offset="1" stop-color="#c4c4c4"/></linearGradient></defs>
<rect x="572" y="482" width="784" height="217" fill="url(#pg)"/>
<line x1="572.5" y1="482" x2="572.5" y2="699" stroke="#a8a8a8"/>
<rect x="586.5" y="506.5" width="150" height="74" fill="#5a5a5a" opacity="0.85"/>
<rect x="583.5" y="503.5" width="150" height="74" fill="#fff" stroke="#000"/>
<rect x="587.5" y="508.5" width="11" height="11" fill="#fff" stroke="#a0a0a0"/>
<path d="M587.5 519.5 V508.5 H598.5" fill="none" stroke="#808080"/>
<path d="M590 513.5 L592 516 L596.5 511" fill="none" stroke="#000" stroke-width="1.6"/>
<rect x="604.5" y="508.5" width="21" height="11" fill="#e00000" stroke="#000"/>
<text x="632.5" y="518" font-size="11" letter-spacing="-0.15" fill="#000">CPU Usage</text>
<rect x="587.5" y="525.5" width="11" height="11" fill="#fff" stroke="#a0a0a0"/>
<path d="M587.5 536.5 V525.5 H598.5" fill="none" stroke="#808080"/>
<rect x="604.5" y="525.5" width="21" height="11" fill="#40b040" stroke="#000"/>
<text x="632.5" y="535" font-size="11" letter-spacing="-0.15" fill="#000">Disk Space</text>
<rect x="587.5" y="542.5" width="11" height="11" fill="#fff" stroke="#a0a0a0"/>
<path d="M587.5 553.5 V542.5 H598.5" fill="none" stroke="#808080"/>
<rect x="604.5" y="542.5" width="21" height="11" fill="#2060c0" stroke="#000"/>
<text x="632.5" y="552" font-size="11" letter-spacing="-0.15" fill="#000">Free Memory</text>
<rect x="587.5" y="559.5" width="11" height="11" fill="#fff" stroke="#a0a0a0"/>
<path d="M587.5 570.5 V559.5 H598.5" fill="none" stroke="#808080"/>
<path d="M590 564.5 L592 567 L596.5 562" fill="none" stroke="#000" stroke-width="1.6"/>
<rect x="604.5" y="559.5" width="21" height="11" fill="#ffff00" stroke="#000"/>
<text x="632.5" y="569" font-size="11" letter-spacing="-0.15" fill="#000">Frames per Second</text>
</svg>
<div class="t" style="left:585.7px;top:609.03px;font-size:12px;color:#1a1a1a;letter-spacing:-0.125px;font-weight:normal;font-style:normal;">Update Chart every</div>
<div class="a" style="left:585px;top:626px;width:39px;height:23px;background:#fff;border:1px solid #c0c0c0"></div>
<div class="t" style="left:588px;top:631.03px;font-size:12px;color:#1a1a1a;letter-spacing:-0.600px;font-weight:normal;font-style:normal;">3</div>
<svg class="a" style="left:607px;top:628px" width="16" height="20" viewBox="607 628 16 20"><rect x="607.5" y="628.5" width="14" height="8" fill="#eaeaea" stroke="#c8c8c8"/><rect x="607.5" y="638.5" width="14" height="8" fill="#eaeaea" stroke="#c8c8c8"/><path d="M611.5 634 L614.5 631 L617.5 634 Z" fill="#000"/><path d="M611.5 641 L614.5 644 L617.5 641 Z" fill="#000"/></svg>
<div class="t" style="left:628.5px;top:631.03px;font-size:12px;color:#1a1a1a;letter-spacing:0.000px;font-weight:normal;font-style:normal;">second(s)</div>
<div class="t" style="left:586.5px;top:659.83px;font-size:12px;color:#1a1a1a;letter-spacing:0.016px;font-weight:normal;font-style:normal;">Test runtime:</div>
<div class="t" style="left:588.7px;top:675.53px;font-size:12px;color:#1a1a1a;letter-spacing:-0.492px;font-weight:normal;font-style:normal;">00:10:06</div>
<svg class="a" style="left:760px;top:482px" width="596" height="217" viewBox="760 482 596 217" font-family="Liberation Sans, sans-serif">
<line x1="826.5" y1="660.5" x2="1279.5" y2="660.5" stroke="#7a7a7a" stroke-dasharray="3,3"/>
<line x1="820.5" y1="665.5" x2="823.5" y2="662.5" stroke="#8a8a8a"/>
<line x1="826.5" y1="646.5" x2="1279.5" y2="646.5" stroke="#7a7a7a" stroke-dasharray="3,3"/>
<line x1="820.5" y1="651.5" x2="823.5" y2="648.5" stroke="#8a8a8a"/>
<line x1="826.5" y1="631.5" x2="1279.5" y2="631.5" stroke="#7a7a7a" stroke-dasharray="3,3"/>
<line x1="820.5" y1="636.5" x2="823.5" y2="633.5" stroke="#8a8a8a"/>
<line x1="826.5" y1="617.5" x2="1279.5" y2="617.5" stroke="#7a7a7a" stroke-dasharray="3,3"/>
<line x1="820.5" y1="622.5" x2="823.5" y2="619.5" stroke="#8a8a8a"/>
<line x1="826.5" y1="603.5" x2="1279.5" y2="603.5" stroke="#7a7a7a" stroke-dasharray="3,3"/>
<line x1="820.5" y1="608.5" x2="823.5" y2="605.5" stroke="#8a8a8a"/>
<line x1="826.5" y1="589.5" x2="1279.5" y2="589.5" stroke="#7a7a7a" stroke-dasharray="3,3"/>
<line x1="820.5" y1="594.5" x2="823.5" y2="591.5" stroke="#8a8a8a"/>
<line x1="826.5" y1="574.5" x2="1279.5" y2="574.5" stroke="#7a7a7a" stroke-dasharray="3,3"/>
<line x1="820.5" y1="579.5" x2="823.5" y2="576.5" stroke="#8a8a8a"/>
<line x1="826.5" y1="560.5" x2="1279.5" y2="560.5" stroke="#7a7a7a" stroke-dasharray="3,3"/>
<line x1="820.5" y1="565.5" x2="823.5" y2="562.5" stroke="#8a8a8a"/>
<line x1="826.5" y1="545.5" x2="1279.5" y2="545.5" stroke="#7a7a7a" stroke-dasharray="3,3"/>
<line x1="820.5" y1="550.5" x2="823.5" y2="547.5" stroke="#8a8a8a"/>
<line x1="826.5" y1="531.5" x2="1279.5" y2="531.5" stroke="#7a7a7a" stroke-dasharray="3,3"/>
<line x1="820.5" y1="536.5" x2="823.5" y2="533.5" stroke="#8a8a8a"/>
<line x1="826.5" y1="516.5" x2="1279.5" y2="516.5" stroke="#7a7a7a" stroke-dasharray="3,3"/>
<line x1="820.5" y1="521.5" x2="823.5" y2="518.5" stroke="#8a8a8a"/>
<line x1="826.5" y1="502.5" x2="1279.5" y2="502.5" stroke="#7a7a7a" stroke-dasharray="3,3"/>
<line x1="820.5" y1="507.5" x2="823.5" y2="504.5" stroke="#8a8a8a"/>
<line x1="828.5" y1="586.5" x2="1279.5" y2="586.5" stroke="#000" stroke-dasharray="3,3"/>
<path d="M815.5 507 V686.5 H1268.5 L1279.5 675.5 V496" fill="none" stroke="#000"/>
<path d="M815.5 507 L822.0 501.5" fill="none" stroke="#000"/>
<path d="M815.5 686.5 L826.5 675.5 H1279.5" fill="none" stroke="#000"/>
<line x1="826.5" y1="505" x2="826.5" y2="675.5" stroke="#000"/>
<line x1="810.5" y1="686.5" x2="815.5" y2="686.5" stroke="#404040"/>
<text x="808.5" y="689.3" font-size="10" text-anchor="end" letter-spacing="-0.8" fill="#000" stroke="none">0</text>
<line x1="812.5" y1="679.5" x2="815.5" y2="679.5" stroke="#404040"/>
<line x1="810.5" y1="672.5" x2="815.5" y2="672.5" stroke="#404040"/>
<text x="808.5" y="675.3" font-size="10" text-anchor="end" letter-spacing="-0.8" fill="#000" stroke="none">50</text>
<line x1="812.5" y1="664.5" x2="815.5" y2="664.5" stroke="#404040"/>
<line x1="810.5" y1="657.5" x2="815.5" y2="657.5" stroke="#404040"/>
<text x="808.5" y="660.3" font-size="10" text-anchor="end" letter-spacing="-0.8" fill="#000" stroke="none">100</text>
<line x1="812.5" y1="650.5" x2="815.5" y2="650.5" stroke="#404040"/>
<line x1="810.5" y1="642.5" x2="815.5" y2="642.5" stroke="#404040"/>
<text x="808.5" y="645.3" font-size="10" text-anchor="end" letter-spacing="-0.8" fill="#000" stroke="none">150</text>
<line x1="812.5" y1="635.5" x2="815.5" y2="635.5" stroke="#404040"/>
<line x1="810.5" y1="628.5" x2="815.5" y2="628.5" stroke="#404040"/>
<text x="808.5" y="631.3" font-size="10" text-anchor="end" letter-spacing="-0.8" fill="#000" stroke="none">200</text>
<line x1="812.5" y1="621.5" x2="815.5" y2="621.5" stroke="#404040"/>
<line x1="810.5" y1="614.5" x2="815.5" y2="614.5" stroke="#404040"/>
<text x="808.5" y="617.3" font-size="10" text-anchor="end" letter-spacing="-0.8" fill="#000" stroke="none">250</text>
<line x1="812.5" y1="606.5" x2="815.5" y2="606.5" stroke="#404040"/>
<line x1="810.5" y1="599.5" x2="815.5" y2="599.5" stroke="#404040"/>
<text x="808.5" y="602.3" font-size="10" text-anchor="end" letter-spacing="-0.8" fill="#000" stroke="none">300</text>
<line x1="812.5" y1="592.5" x2="815.5" y2="592.5" stroke="#404040"/>
<line x1="810.5" y1="584.5" x2="815.5" y2="584.5" stroke="#404040"/>
<text x="808.5" y="587.3" font-size="10" text-anchor="end" letter-spacing="-0.8" fill="#000" stroke="none">350</text>
<line x1="812.5" y1="577.5" x2="815.5" y2="577.5" stroke="#404040"/>
<line x1="810.5" y1="570.5" x2="815.5" y2="570.5" stroke="#404040"/>
<text x="808.5" y="573.3" font-size="10" text-anchor="end" letter-spacing="-0.8" fill="#000" stroke="none">400</text>
<line x1="812.5" y1="563.5" x2="815.5" y2="563.5" stroke="#404040"/>
<line x1="810.5" y1="556.5" x2="815.5" y2="556.5" stroke="#404040"/>
<text x="808.5" y="559.3" font-size="10" text-anchor="end" letter-spacing="-0.8" fill="#000" stroke="none">450</text>
<line x1="812.5" y1="548.5" x2="815.5" y2="548.5" stroke="#404040"/>
<line x1="810.5" y1="541.5" x2="815.5" y2="541.5" stroke="#404040"/>
<text x="808.5" y="544.3" font-size="10" text-anchor="end" letter-spacing="-0.8" fill="#000" stroke="none">500</text>
<line x1="812.5" y1="534.5" x2="815.5" y2="534.5" stroke="#404040"/>
<line x1="810.5" y1="526.5" x2="815.5" y2="526.5" stroke="#404040"/>
<text x="808.5" y="529.3" font-size="10" text-anchor="end" letter-spacing="-0.8" fill="#000" stroke="none">550</text>
<line x1="812.5" y1="519.5" x2="815.5" y2="519.5" stroke="#404040"/>
<line x1="810.5" y1="512.5" x2="815.5" y2="512.5" stroke="#404040"/>
<text x="808.5" y="515.3" font-size="10" text-anchor="end" letter-spacing="-0.8" fill="#000" stroke="none">600</text>
<line x1="1279.5" y1="675.5" x2="1285.5" y2="675.5" stroke="#707070"/>
<text x="1287" y="678.3" font-size="10" letter-spacing="-0.8" fill="#000" stroke="none">0</text>
<text x="1295.2" y="678.3" font-size="9.5" fill="#000" stroke="none">%</text>
<line x1="1279.5" y1="657.5" x2="1285.5" y2="657.5" stroke="#707070"/>
<text x="1287" y="660.3" font-size="10" letter-spacing="-0.8" fill="#000" stroke="none">10</text>
<text x="1299.9" y="660.3" font-size="9.5" fill="#000" stroke="none">%</text>
<line x1="1279.5" y1="639.5" x2="1285.5" y2="639.5" stroke="#707070"/>
<text x="1287" y="642.3" font-size="10" letter-spacing="-0.8" fill="#000" stroke="none">20</text>
<text x="1299.9" y="642.3" font-size="9.5" fill="#000" stroke="none">%</text>
<line x1="1279.5" y1="621.5" x2="1285.5" y2="621.5" stroke="#707070"/>
<text x="1287" y="624.3" font-size="10" letter-spacing="-0.8" fill="#000" stroke="none">30</text>
<text x="1299.9" y="624.3" font-size="9.5" fill="#000" stroke="none">%</text>
<line x1="1279.5" y1="603.5" x2="1285.5" y2="603.5" stroke="#707070"/>
<text x="1287" y="606.3" font-size="10" letter-spacing="-0.8" fill="#000" stroke="none">40</text>
<text x="1299.9" y="606.3" font-size="9.5" fill="#000" stroke="none">%</text>
<line x1="1279.5" y1="586.5" x2="1285.5" y2="586.5" stroke="#707070"/>
<text x="1287" y="589.3" font-size="10" letter-spacing="-0.8" fill="#000" stroke="none">50</text>
<text x="1299.9" y="589.3" font-size="9.5" fill="#000" stroke="none">%</text>
<line x1="1279.5" y1="568.5" x2="1285.5" y2="568.5" stroke="#707070"/>
<text x="1287" y="571.3" font-size="10" letter-spacing="-0.8" fill="#000" stroke="none">60</text>
<text x="1299.9" y="571.3" font-size="9.5" fill="#000" stroke="none">%</text>
<line x1="1279.5" y1="550.5" x2="1285.5" y2="550.5" stroke="#707070"/>
<text x="1287" y="553.3" font-size="10" letter-spacing="-0.8" fill="#000" stroke="none">70</text>
<text x="1299.9" y="553.3" font-size="9.5" fill="#000" stroke="none">%</text>
<line x1="1279.5" y1="532.5" x2="1285.5" y2="532.5" stroke="#707070"/>
<text x="1287" y="535.3" font-size="10" letter-spacing="-0.8" fill="#000" stroke="none">80</text>
<text x="1299.9" y="535.3" font-size="9.5" fill="#000" stroke="none">%</text>
<line x1="1279.5" y1="514.5" x2="1285.5" y2="514.5" stroke="#707070"/>
<text x="1287" y="517.3" font-size="10" letter-spacing="-0.8" fill="#000" stroke="none">90</text>
<text x="1299.9" y="517.3" font-size="9.5" fill="#000" stroke="none">%</text>
<line x1="1279.5" y1="496.5" x2="1285.5" y2="496.5" stroke="#707070"/>
<text x="1287" y="499.3" font-size="10" letter-spacing="-0.8" fill="#000" stroke="none">100</text>
<text x="1304.6" y="499.3" font-size="9.5" fill="#000" stroke="none">%</text>
<text transform="translate(786.8,604.5) rotate(-90)" font-size="9.5" letter-spacing="0" fill="#000">FPS</text>
<text transform="translate(1321,555) rotate(90)" font-size="11" letter-spacing="0.3" fill="#000">CPU Usage</text>
<polygon points="821.00,502.20 832.34,502.20 837.54,497.00 826.20,497.00" fill="#e00808" stroke="#4a0000" stroke-width="1" stroke-linejoin="round"/>
<polygon points="832.34,502.20 843.68,502.20 848.88,497.00 837.54,497.00" fill="#e00808" stroke="#4a0000" stroke-width="1" stroke-linejoin="round"/>
<polygon points="843.68,502.20 855.02,502.20 860.22,497.00 848.88,497.00" fill="#e00808" stroke="#4a0000" stroke-width="1" stroke-linejoin="round"/>
<polygon points="855.02,502.20 866.36,502.20 871.56,497.00 860.22,497.00" fill="#e00808" stroke="#4a0000" stroke-width="1" stroke-linejoin="round"/>
<polygon points="866.36,502.20 877.70,502.20 882.90,497.00 871.56,497.00" fill="#e00808" stroke="#4a0000" stroke-width="1" stroke-linejoin="round"/>
<polygon points="877.70,502.20 889.04,502.20 894.24,497.00 882.90,497.00" fill="#e00808" stroke="#4a0000" stroke-width="1" stroke-linejoin="round"/>
<polygon points="889.04,502.20 900.38,502.20 905.58,497.00 894.24,497.00" fill="#e00808" stroke="#4a0000" stroke-width="1" stroke-linejoin="round"/>
<polygon points="900.38,502.20 911.72,502.20 916.92,497.00 905.58,497.00" fill="#e00808" stroke="#4a0000" stroke-width="1" stroke-linejoin="round"/>
<polygon points="911.72,502.20 923.06,502.20 928.26,497.00 916.92,497.00" fill="#e00808" stroke="#4a0000" stroke-width="1" stroke-linejoin="round"/>
<polygon points="923.06,502.20 934.40,502.20 939.60,497.00 928.26,497.00" fill="#e00808" stroke="#4a0000" stroke-width="1" stroke-linejoin="round"/>
<polygon points="934.40,502.20 945.74,502.20 950.94,497.00 939.60,497.00" fill="#e00808" stroke="#4a0000" stroke-width="1" stroke-linejoin="round"/>
<polygon points="945.74,502.20 957.08,502.20 962.28,497.00 950.94,497.00" fill="#e00808" stroke="#4a0000" stroke-width="1" stroke-linejoin="round"/>
<polygon points="957.08,502.20 968.42,502.20 973.62,497.00 962.28,497.00" fill="#e00808" stroke="#4a0000" stroke-width="1" stroke-linejoin="round"/>
<polygon points="968.42,502.20 979.76,502.20 984.96,497.00 973.62,497.00" fill="#e00808" stroke="#4a0000" stroke-width="1" stroke-linejoin="round"/>
<polygon points="979.76,502.20 991.10,502.20 996.30,497.00 984.96,497.00" fill="#e00808" stroke="#4a0000" stroke-width="1" stroke-linejoin="round"/>
<polygon points="991.10,502.20 1002.44,502.20 1007.64,497.00 996.30,497.00" fill="#e00808" stroke="#4a0000" stroke-width="1" stroke-linejoin="round"/>
<polygon points="1002.44,502.20 1013.78,502.20 1018.98,497.00 1007.64,497.00" fill="#e00808" stroke="#4a0000" stroke-width="1" stroke-linejoin="round"/>
<polygon points="1013.78,502.20 1025.12,502.20 1030.32,497.00 1018.98,497.00" fill="#e00808" stroke="#4a0000" stroke-width="1" stroke-linejoin="round"/>
<polygon points="1025.12,502.20 1036.46,502.20 1041.66,497.00 1030.32,497.00" fill="#e00808" stroke="#4a0000" stroke-width="1" stroke-linejoin="round"/>
<polygon points="1036.46,502.20 1047.80,502.20 1053.00,497.00 1041.66,497.00" fill="#e00808" stroke="#4a0000" stroke-width="1" stroke-linejoin="round"/>
<polygon points="1047.80,502.20 1059.14,502.20 1064.34,497.00 1053.00,497.00" fill="#e00808" stroke="#4a0000" stroke-width="1" stroke-linejoin="round"/>
<polygon points="1059.14,502.20 1070.48,502.20 1075.68,497.00 1064.34,497.00" fill="#e00808" stroke="#4a0000" stroke-width="1" stroke-linejoin="round"/>
<polygon points="1070.48,502.20 1081.82,502.20 1087.02,497.00 1075.68,497.00" fill="#e00808" stroke="#4a0000" stroke-width="1" stroke-linejoin="round"/>
<polygon points="1081.82,502.20 1093.16,502.20 1098.36,497.00 1087.02,497.00" fill="#e00808" stroke="#4a0000" stroke-width="1" stroke-linejoin="round"/>
<polygon points="1093.16,502.20 1104.50,502.20 1109.70,497.00 1098.36,497.00" fill="#e00808" stroke="#4a0000" stroke-width="1" stroke-linejoin="round"/>
<polygon points="1104.50,502.20 1115.84,502.20 1121.04,497.00 1109.70,497.00" fill="#e00808" stroke="#4a0000" stroke-width="1" stroke-linejoin="round"/>
<polygon points="1115.84,502.20 1127.18,502.20 1132.38,497.00 1121.04,497.00" fill="#e00808" stroke="#4a0000" stroke-width="1" stroke-linejoin="round"/>
<polygon points="1127.18,502.20 1138.52,502.20 1143.72,497.00 1132.38,497.00" fill="#e00808" stroke="#4a0000" stroke-width="1" stroke-linejoin="round"/>
<polygon points="1138.52,502.20 1149.86,502.20 1155.06,497.00 1143.72,497.00" fill="#e00808" stroke="#4a0000" stroke-width="1" stroke-linejoin="round"/>
<polygon points="1149.86,502.20 1161.20,502.20 1166.40,497.00 1155.06,497.00" fill="#e00808" stroke="#4a0000" stroke-width="1" stroke-linejoin="round"/>
<polygon points="1161.20,502.20 1172.54,502.20 1177.74,497.00 1166.40,497.00" fill="#e00808" stroke="#4a0000" stroke-width="1" stroke-linejoin="round"/>
<polygon points="1172.54,502.20 1183.88,502.20 1189.08,497.00 1177.74,497.00" fill="#e00808" stroke="#4a0000" stroke-width="1" stroke-linejoin="round"/>
<polygon points="1183.88,502.20 1195.22,502.20 1200.42,497.00 1189.08,497.00" fill="#e00808" stroke="#4a0000" stroke-width="1" stroke-linejoin="round"/>
<polygon points="1195.22,502.20 1206.56,502.20 1211.76,497.00 1200.42,497.00" fill="#e00808" stroke="#4a0000" stroke-width="1" stroke-linejoin="round"/>
<polygon points="1206.56,502.20 1217.90,502.20 1223.10,497.00 1211.76,497.00" fill="#e00808" stroke="#4a0000" stroke-width="1" stroke-linejoin="round"/>
<polygon points="1217.90,502.20 1229.24,502.20 1234.44,497.00 1223.10,497.00" fill="#e00808" stroke="#4a0000" stroke-width="1" stroke-linejoin="round"/>
<polygon points="1229.24,502.20 1240.58,502.20 1245.78,497.00 1234.44,497.00" fill="#e00808" stroke="#4a0000" stroke-width="1" stroke-linejoin="round"/>
<polygon points="1240.58,502.20 1251.92,502.20 1257.12,497.00 1245.78,497.00" fill="#e00808" stroke="#4a0000" stroke-width="1" stroke-linejoin="round"/>
<polygon points="1251.92,502.20 1263.26,502.20 1268.46,497.00 1257.12,497.00" fill="#e00808" stroke="#4a0000" stroke-width="1" stroke-linejoin="round"/>
<polygon points="1263.26,502.20 1274.60,502.20 1279.80,497.00 1268.46,497.00" fill="#e00808" stroke="#4a0000" stroke-width="1" stroke-linejoin="round"/>
<rect x="821.00" y="502.20" width="11.34" height="3.0" fill="#8e1616" stroke="#4a0000" stroke-width="1"/>
<rect x="832.34" y="502.20" width="11.34" height="3.0" fill="#8e1616" stroke="#4a0000" stroke-width="1"/>
<rect x="843.68" y="502.20" width="11.34" height="3.0" fill="#8e1616" stroke="#4a0000" stroke-width="1"/>
<rect x="855.02" y="502.20" width="11.34" height="3.0" fill="#8e1616" stroke="#4a0000" stroke-width="1"/>
<rect x="866.36" y="502.20" width="11.34" height="3.0" fill="#8e1616" stroke="#4a0000" stroke-width="1"/>
<rect x="877.70" y="502.20" width="11.34" height="3.0" fill="#8e1616" stroke="#4a0000" stroke-width="1"/>
<rect x="889.04" y="502.20" width="11.34" height="3.0" fill="#8e1616" stroke="#4a0000" stroke-width="1"/>
<rect x="900.38" y="502.20" width="11.34" height="3.0" fill="#8e1616" stroke="#4a0000" stroke-width="1"/>
<rect x="911.72" y="502.20" width="11.34" height="3.0" fill="#8e1616" stroke="#4a0000" stroke-width="1"/>
<rect x="923.06" y="502.20" width="11.34" height="3.0" fill="#8e1616" stroke="#4a0000" stroke-width="1"/>
<rect x="934.40" y="502.20" width="11.34" height="3.0" fill="#8e1616" stroke="#4a0000" stroke-width="1"/>
<rect x="945.74" y="502.20" width="11.34" height="3.0" fill="#8e1616" stroke="#4a0000" stroke-width="1"/>
<rect x="957.08" y="502.20" width="11.34" height="3.0" fill="#8e1616" stroke="#4a0000" stroke-width="1"/>
<rect x="968.42" y="502.20" width="11.34" height="3.0" fill="#8e1616" stroke="#4a0000" stroke-width="1"/>
<rect x="979.76" y="502.20" width="11.34" height="3.0" fill="#8e1616" stroke="#4a0000" stroke-width="1"/>
<rect x="991.10" y="502.20" width="11.34" height="3.0" fill="#8e1616" stroke="#4a0000" stroke-width="1"/>
<rect x="1002.44" y="502.20" width="11.34" height="3.0" fill="#8e1616" stroke="#4a0000" stroke-width="1"/>
<rect x="1013.78" y="502.20" width="11.34" height="3.0" fill="#8e1616" stroke="#4a0000" stroke-width="1"/>
<rect x="1025.12" y="502.20" width="11.34" height="3.0" fill="#8e1616" stroke="#4a0000" stroke-width="1"/>
<rect x="1036.46" y="502.20" width="11.34" height="3.0" fill="#8e1616" stroke="#4a0000" stroke-width="1"/>
<rect x="1047.80" y="502.20" width="11.34" height="3.0" fill="#8e1616" stroke="#4a0000" stroke-width="1"/>
<rect x="1059.14" y="502.20" width="11.34" height="3.0" fill="#8e1616" stroke="#4a0000" stroke-width="1"/>
<rect x="1070.48" y="502.20" width="11.34" height="3.0" fill="#8e1616" stroke="#4a0000" stroke-width="1"/>
<rect x="1081.82" y="502.20" width="11.34" height="3.0" fill="#8e1616" stroke="#4a0000" stroke-width="1"/>
<rect x="1093.16" y="502.20" width="11.34" height="3.0" fill="#8e1616" stroke="#4a0000" stroke-width="1"/>
<rect x="1104.50" y="502.20" width="11.34" height="3.0" fill="#8e1616" stroke="#4a0000" stroke-width="1"/>
<rect x="1115.84" y="502.20" width="11.34" height="3.0" fill="#8e1616" stroke="#4a0000" stroke-width="1"/>
<rect x="1127.18" y="502.20" width="11.34" height="3.0" fill="#8e1616" stroke="#4a0000" stroke-width="1"/>
<rect x="1138.52" y="502.20" width="11.34" height="3.0" fill="#8e1616" stroke="#4a0000" stroke-width="1"/>
<rect x="1149.86" y="502.20" width="11.34" height="3.0" fill="#8e1616" stroke="#4a0000" stroke-width="1"/>
<rect x="1161.20" y="502.20" width="11.34" height="3.0" fill="#8e1616" stroke="#4a0000" stroke-width="1"/>
<rect x="1172.54" y="502.20" width="11.34" height="3.0" fill="#8e1616" stroke="#4a0000" stroke-width="1"/>
<rect x="1183.88" y="502.20" width="11.34" height="3.0" fill="#8e1616" stroke="#4a0000" stroke-width="1"/>
<rect x="1195.22" y="502.20" width="11.34" height="3.0" fill="#8e1616" stroke="#4a0000" stroke-width="1"/>
<rect x="1206.56" y="502.20" width="11.34" height="3.0" fill="#8e1616" stroke="#4a0000" stroke-width="1"/>
<rect x="1217.90" y="502.20" width="11.34" height="3.0" fill="#8e1616" stroke="#4a0000" stroke-width="1"/>
<rect x="1229.24" y="502.20" width="11.34" height="3.0" fill="#8e1616" stroke="#4a0000" stroke-width="1"/>
<rect x="1240.58" y="502.20" width="11.34" height="3.0" fill="#8e1616" stroke="#4a0000" stroke-width="1"/>
<rect x="1251.92" y="502.20" width="11.34" height="3.0" fill="#8e1616" stroke="#4a0000" stroke-width="1"/>
<rect x="1263.26" y="502.20" width="11.34" height="3.0" fill="#8e1616" stroke="#4a0000" stroke-width="1"/>
<polygon points="1274.60,502.20 1279.80,497.00 1279.80,500.00 1274.60,505.20" fill="#8e1616" stroke="#4a0000" stroke-width="1"/>
<polygon points="816.00,518.60 827.32,518.60 833.12,512.80 821.80,512.80" fill="#ffff00" stroke="#000" stroke-width="1" stroke-linejoin="round"/>
<polygon points="827.32,518.60 838.64,518.60 844.44,512.80 833.12,512.80" fill="#ffff00" stroke="#000" stroke-width="1" stroke-linejoin="round"/>
<polygon points="838.64,518.30 849.96,518.30 855.76,512.50 844.44,512.50" fill="#ffff00" stroke="#000" stroke-width="1" stroke-linejoin="round"/>
<polygon points="849.96,518.10 861.28,518.10 867.08,512.30 855.76,512.30" fill="#ffff00" stroke="#000" stroke-width="1" stroke-linejoin="round"/>
<polygon points="861.28,518.10 872.60,518.10 878.40,512.30 867.08,512.30" fill="#ffff00" stroke="#000" stroke-width="1" stroke-linejoin="round"/>
<polygon points="872.60,518.10 883.92,518.10 889.72,512.30 878.40,512.30" fill="#ffff00" stroke="#000" stroke-width="1" stroke-linejoin="round"/>
<polygon points="883.92,518.10 895.24,518.10 901.04,512.30 889.72,512.30" fill="#ffff00" stroke="#000" stroke-width="1" stroke-linejoin="round"/>
<polygon points="895.24,518.10 906.56,518.10 912.36,512.30 901.04,512.30" fill="#ffff00" stroke="#000" stroke-width="1" stroke-linejoin="round"/>
<polygon points="906.56,518.10 917.88,518.10 923.68,512.30 912.36,512.30" fill="#ffff00" stroke="#000" stroke-width="1" stroke-linejoin="round"/>
<polygon points="917.88,517.30 929.20,517.30 935.00,511.50 923.68,511.50" fill="#ffff00" stroke="#000" stroke-width="1" stroke-linejoin="round"/>
<polygon points="929.20,517.30 940.52,517.30 946.32,511.50 935.00,511.50" fill="#ffff00" stroke="#000" stroke-width="1" stroke-linejoin="round"/>
<polygon points="940.52,517.30 951.84,517.30 957.64,511.50 946.32,511.50" fill="#ffff00" stroke="#000" stroke-width="1" stroke-linejoin="round"/>
<polygon points="951.84,517.30 963.16,517.30 968.96,511.50 957.64,511.50" fill="#ffff00" stroke="#000" stroke-width="1" stroke-linejoin="round"/>
<polygon points="963.16,517.30 974.48,517.30 980.28,511.50 968.96,511.50" fill="#ffff00" stroke="#000" stroke-width="1" stroke-linejoin="round"/>
<polygon points="974.48,517.30 985.80,517.30 991.60,511.50 980.28,511.50" fill="#ffff00" stroke="#000" stroke-width="1" stroke-linejoin="round"/>
<polygon points="985.80,517.30 997.12,517.30 1002.92,511.50 991.60,511.50" fill="#ffff00" stroke="#000" stroke-width="1" stroke-linejoin="round"/>
<polygon points="997.12,517.30 1008.44,517.30 1014.24,511.50 1002.92,511.50" fill="#ffff00" stroke="#000" stroke-width="1" stroke-linejoin="round"/>
<polygon points="1008.44,517.30 1019.76,517.30 1025.56,511.50 1014.24,511.50" fill="#ffff00" stroke="#000" stroke-width="1" stroke-linejoin="round"/>
<polygon points="1019.76,518.50 1031.08,518.50 1036.88,512.70 1025.56,512.70" fill="#ffff00" stroke="#000" stroke-width="1" stroke-linejoin="round"/>
<polygon points="1031.08,518.50 1042.40,518.50 1048.20,512.70 1036.88,512.70" fill="#ffff00" stroke="#000" stroke-width="1" stroke-linejoin="round"/>
<polygon points="1042.40,518.50 1053.72,518.50 1059.52,512.70 1048.20,512.70" fill="#ffff00" stroke="#000" stroke-width="1" stroke-linejoin="round"/>
<polygon points="1053.72,518.10 1065.04,518.10 1070.84,512.30 1059.52,512.30" fill="#ffff00" stroke="#000" stroke-width="1" stroke-linejoin="round"/>
<polygon points="1065.04,518.10 1076.36,518.10 1082.16,512.30 1070.84,512.30" fill="#ffff00" stroke="#000" stroke-width="1" stroke-linejoin="round"/>
<polygon points="1076.36,518.10 1087.68,518.10 1093.48,512.30 1082.16,512.30" fill="#ffff00" stroke="#000" stroke-width="1" stroke-linejoin="round"/>
<polygon points="1087.68,518.10 1099.00,518.10 1104.80,512.30 1093.48,512.30" fill="#ffff00" stroke="#000" stroke-width="1" stroke-linejoin="round"/>
<polygon points="1099.00,518.10 1110.32,518.10 1116.12,512.30 1104.80,512.30" fill="#ffff00" stroke="#000" stroke-width="1" stroke-linejoin="round"/>
<polygon points="1110.32,518.10 1121.64,518.10 1127.44,512.30 1116.12,512.30" fill="#ffff00" stroke="#000" stroke-width="1" stroke-linejoin="round"/>
<polygon points="1121.64,518.10 1132.96,518.10 1138.76,512.30 1127.44,512.30" fill="#ffff00" stroke="#000" stroke-width="1" stroke-linejoin="round"/>
<polygon points="1132.96,518.10 1144.28,518.10 1150.08,512.30 1138.76,512.30" fill="#ffff00" stroke="#000" stroke-width="1" stroke-linejoin="round"/>
<polygon points="1144.28,518.10 1155.60,518.10 1161.40,512.30 1150.08,512.30" fill="#ffff00" stroke="#000" stroke-width="1" stroke-linejoin="round"/>
<polygon points="1155.60,518.10 1166.92,518.10 1172.72,512.30 1161.40,512.30" fill="#ffff00" stroke="#000" stroke-width="1" stroke-linejoin="round"/>
<polygon points="1166.92,518.10 1178.24,518.10 1184.04,512.30 1172.72,512.30" fill="#ffff00" stroke="#000" stroke-width="1" stroke-linejoin="round"/>
<polygon points="1178.24,519.50 1189.56,519.50 1195.36,513.70 1184.04,513.70" fill="#ffff00" stroke="#000" stroke-width="1" stroke-linejoin="round"/>
<polygon points="1189.56,519.50 1200.88,519.50 1206.68,513.70 1195.36,513.70" fill="#ffff00" stroke="#000" stroke-width="1" stroke-linejoin="round"/>
<polygon points="1200.88,517.90 1212.20,517.90 1218.00,512.10 1206.68,512.10" fill="#ffff00" stroke="#000" stroke-width="1" stroke-linejoin="round"/>
<polygon points="1212.20,517.90 1223.52,517.90 1229.32,512.10 1218.00,512.10" fill="#ffff00" stroke="#000" stroke-width="1" stroke-linejoin="round"/>
<polygon points="1223.52,517.90 1234.84,517.90 1240.64,512.10 1229.32,512.10" fill="#ffff00" stroke="#000" stroke-width="1" stroke-linejoin="round"/>
<polygon points="1234.84,517.90 1246.16,517.90 1251.96,512.10 1240.64,512.10" fill="#ffff00" stroke="#000" stroke-width="1" stroke-linejoin="round"/>
<polygon points="1246.16,517.90 1257.48,517.90 1263.28,512.10 1251.96,512.10" fill="#ffff00" stroke="#000" stroke-width="1" stroke-linejoin="round"/>
<polygon points="1257.48,516.90 1268.80,516.90 1274.60,511.10 1263.28,511.10" fill="#ffff00" stroke="#000" stroke-width="1" stroke-linejoin="round"/>
<rect x="816.00" y="518.60" width="11.32" height="3.0" fill="#ffff98" stroke="#000" stroke-width="1"/>
<rect x="827.32" y="518.60" width="11.32" height="3.0" fill="#ffff98" stroke="#000" stroke-width="1"/>
<rect x="838.64" y="518.30" width="11.32" height="3.0" fill="#ffff98" stroke="#000" stroke-width="1"/>
<rect x="849.96" y="518.10" width="11.32" height="3.0" fill="#ffff98" stroke="#000" stroke-width="1"/>
<rect x="861.28" y="518.10" width="11.32" height="3.0" fill="#ffff98" stroke="#000" stroke-width="1"/>
<rect x="872.60" y="518.10" width="11.32" height="3.0" fill="#ffff98" stroke="#000" stroke-width="1"/>
<rect x="883.92" y="518.10" width="11.32" height="3.0" fill="#ffff98" stroke="#000" stroke-width="1"/>
<rect x="895.24" y="518.10" width="11.32" height="3.0" fill="#ffff98" stroke="#000" stroke-width="1"/>
<rect x="906.56" y="518.10" width="11.32" height="3.0" fill="#ffff98" stroke="#000" stroke-width="1"/>
<rect x="917.88" y="517.30" width="11.32" height="3.0" fill="#ffff98" stroke="#000" stroke-width="1"/>
<rect x="929.20" y="517.30" width="11.32" height="3.0" fill="#ffff98" stroke="#000" stroke-width="1"/>
<rect x="940.52" y="517.30" width="11.32" height="3.0" fill="#ffff98" stroke="#000" stroke-width="1"/>
<rect x="951.84" y="517.30" width="11.32" height="3.0" fill="#ffff98" stroke="#000" stroke-width="1"/>
<rect x="963.16" y="517.30" width="11.32" height="3.0" fill="#ffff98" stroke="#000" stroke-width="1"/>
<rect x="974.48" y="517.30" width="11.32" height="3.0" fill="#ffff98" stroke="#000" stroke-width="1"/>
<rect x="985.80" y="517.30" width="11.32" height="3.0" fill="#ffff98" stroke="#000" stroke-width="1"/>
<rect x="997.12" y="517.30" width="11.32" height="3.0" fill="#ffff98" stroke="#000" stroke-width="1"/>
<rect x="1008.44" y="517.30" width="11.32" height="3.0" fill="#ffff98" stroke="#000" stroke-width="1"/>
<rect x="1019.76" y="518.50" width="11.32" height="3.0" fill="#ffff98" stroke="#000" stroke-width="1"/>
<rect x="1031.08" y="518.50" width="11.32" height="3.0" fill="#ffff98" stroke="#000" stroke-width="1"/>
<rect x="1042.40" y="518.50" width="11.32" height="3.0" fill="#ffff98" stroke="#000" stroke-width="1"/>
<rect x="1053.72" y="518.10" width="11.32" height="3.0" fill="#ffff98" stroke="#000" stroke-width="1"/>
<rect x="1065.04" y="518.10" width="11.32" height="3.0" fill="#ffff98" stroke="#000" stroke-width="1"/>
<rect x="1076.36" y="518.10" width="11.32" height="3.0" fill="#ffff98" stroke="#000" stroke-width="1"/>
<rect x="1087.68" y="518.10" width="11.32" height="3.0" fill="#ffff98" stroke="#000" stroke-width="1"/>
<rect x="1099.00" y="518.10" width="11.32" height="3.0" fill="#ffff98" stroke="#000" stroke-width="1"/>
<rect x="1110.32" y="518.10" width="11.32" height="3.0" fill="#ffff98" stroke="#000" stroke-width="1"/>
<rect x="1121.64" y="518.10" width="11.32" height="3.0" fill="#ffff98" stroke="#000" stroke-width="1"/>
<rect x="1132.96" y="518.10" width="11.32" height="3.0" fill="#ffff98" stroke="#000" stroke-width="1"/>
<rect x="1144.28" y="518.10" width="11.32" height="3.0" fill="#ffff98" stroke="#000" stroke-width="1"/>
<rect x="1155.60" y="518.10" width="11.32" height="3.0" fill="#ffff98" stroke="#000" stroke-width="1"/>
<rect x="1166.92" y="518.10" width="11.32" height="3.0" fill="#ffff98" stroke="#000" stroke-width="1"/>
<rect x="1178.24" y="519.50" width="11.32" height="3.0" fill="#ffff98" stroke="#000" stroke-width="1"/>
<rect x="1189.56" y="519.50" width="11.32" height="3.0" fill="#ffff98" stroke="#000" stroke-width="1"/>
<rect x="1200.88" y="517.90" width="11.32" height="3.0" fill="#ffff98" stroke="#000" stroke-width="1"/>
<rect x="1212.20" y="517.90" width="11.32" height="3.0" fill="#ffff98" stroke="#000" stroke-width="1"/>
<rect x="1223.52" y="517.90" width="11.32" height="3.0" fill="#ffff98" stroke="#000" stroke-width="1"/>
<rect x="1234.84" y="517.90" width="11.32" height="3.0" fill="#ffff98" stroke="#000" stroke-width="1"/>
<rect x="1246.16" y="517.90" width="11.32" height="3.0" fill="#ffff98" stroke="#000" stroke-width="1"/>
<rect x="1257.48" y="516.90" width="11.32" height="3.0" fill="#ffff98" stroke="#000" stroke-width="1"/>
<polygon points="1268.80,516.90 1274.60,511.10 1274.60,514.10 1268.80,519.90" fill="#ffff98" stroke="#000" stroke-width="1"/>
</svg>
<div class="a" style="left:572px;top:699px;width:784px;height:21px;background:#f0f0f0;border-top:1px solid #fff;border-bottom:1px solid #fff"></div>
<div class="a" style="left:1354px;top:482px;width:2px;height:238px;background:#fcfcfc"></div>
<div class="a" style="left:1356px;top:22px;width:1px;height:706px;background:#8c58c4"></div>
<div class="a" style="left:564px;top:720px;width:795px;height:1px;background:#8c58c4"></div>
<div class="a" style="left:564px;top:727px;width:795px;height:1px;background:#8048b8"></div>
<div class="a" style="left:572px;top:701px;width:91px;height:17px;background:#0cae2c"></div>
<div class="a" style="left:663px;top:701px;width:7px;height:17px;background:#dadada;border-right:1px solid #c0c0c0"></div>
<div class="a" style="left:677px;top:701px;width:1px;height:17px;background:#c8c8c8"></div>
<div class="a" style="left:803px;top:701px;width:1px;height:17px;background:#c8c8c8"></div>
<div class="a" style="left:900px;top:701px;width:1px;height:17px;background:#c8c8c8"></div>
<div class="a" style="left:951px;top:701px;width:1px;height:17px;background:#c8c8c8"></div>
<div class="t" style="left:682.7px;top:704.53px;font-size:12px;color:#1a1a1a;letter-spacing:-0.368px;font-weight:normal;font-style:normal;">7096 MB Memory Free</div>
<div class="t" style="left:808px;top:704.53px;font-size:12px;color:#1a1a1a;letter-spacing:-0.445px;font-weight:normal;font-style:normal;">100% CPU Usage</div>
<div class="t" style="left:908px;top:704.53px;font-size:12px;color:#1a1a1a;letter-spacing:-0.691px;font-weight:normal;font-style:normal;">587 FPS</div>
<div class="t" style="left:956px;top:704.53px;font-size:12px;color:#1a1a1a;letter-spacing:-0.052px;font-weight:normal;font-style:normal;">Start selected tests</div>
</body></html>
